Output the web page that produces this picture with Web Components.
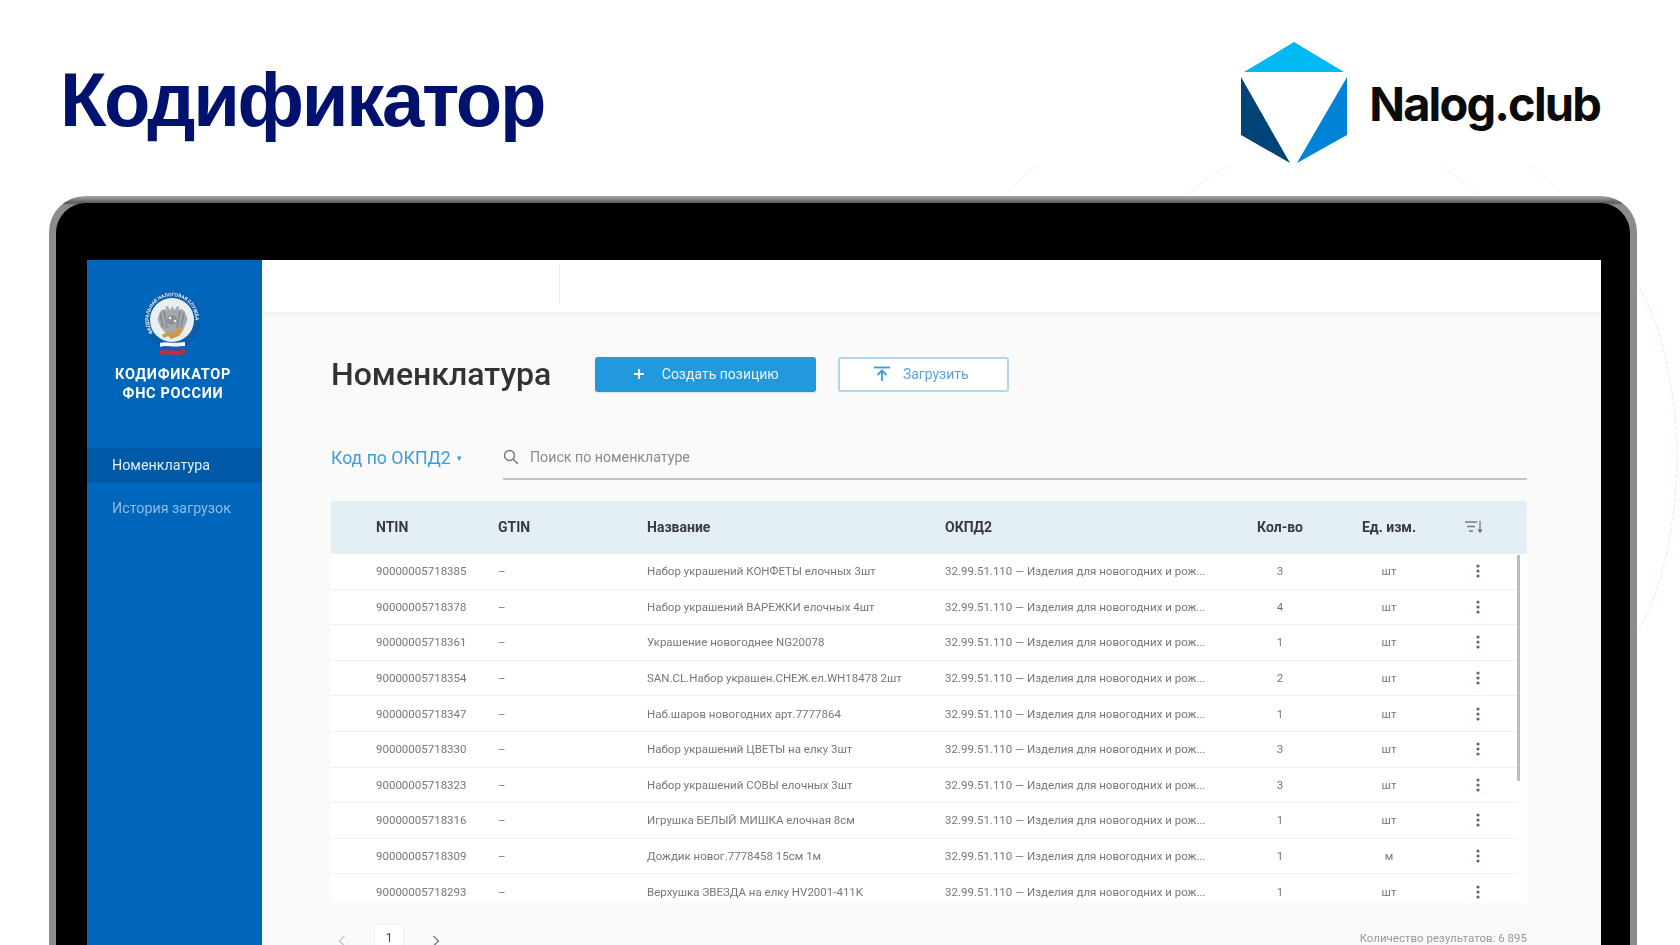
<!DOCTYPE html>
<html lang="ru">
<head>
<meta charset="utf-8">
<title>Кодификатор</title>
<style>
    html, body { margin: 0; height: 100%; background: #fff; overflow: hidden; }
    body { font-family: Roboto, "Liberation Sans", sans-serif; }
</style>
</head>
<body>
<slide-page>
    <slide-header></slide-header>
    <laptop-frame>
        <app-sidebar></app-sidebar>
        <nomenclature-view></nomenclature-view>
    </laptop-frame>
</slide-page>

<script>
// Outer slide: title row + laptop mockup
class SlidePage extends HTMLElement {
    constructor() {
        super();
        this.attachShadow({ mode: 'open' });
        this.shadowRoot.innerHTML = `
            <style>
                :host { display: block; position: relative; width: 1680px; height: 945px; overflow: hidden; background: #fff; }
                .arcs { position: absolute; left: 0; top: 0; }
                .content { position: relative; }
            </style>
            <svg class="arcs" width="1680" height="945" fill="none" stroke="#fdeef1" stroke-width="1">
                <path d="M1004 197 Q1020 178 1037 165"/>
                <path d="M1184 197 Q1205 178 1230 165"/>
                <path d="M1440 165 Q1462 180 1483 197"/>
                <path d="M1531 165 Q1548 180 1564 197"/>
                <path d="M1636 283 C1664 325 1677 400 1677 458 C1677 516 1664 590 1636 633" stroke="#fddfe5" stroke-dasharray="4 2"/>
            </svg>
            <div class="content"><slot></slot></div>
        `;
    }
}

class SlideHeader extends HTMLElement {
    constructor() {
        super();
        this.attachShadow({ mode: 'open' });
        this.shadowRoot.innerHTML = `
            <style>
                :host { display: flex; justify-content: space-between; height: 196px; padding: 0 80px 0 60px; }
                h1 {
                    margin: 54px 0 0;
                    font: 700 76px/1.2 "Liberation Sans", Arial, sans-serif;
                    letter-spacing: -2.3px;
                    color: #00126e;
                }
                .logo { display: flex; align-items: flex-start; padding-top: 42px; gap: 22px; }
                .brand {
                    font: 700 47px/1 Inter, "Liberation Sans", sans-serif;
                    color: #0b0b0b;
                    letter-spacing: -1.85px;
                    margin-top: 38px;
                }
                svg { display: block; }
            </style>
            <h1>Кодификатор</h1>
            <div class="logo">
                <svg width="106" height="122" viewBox="1242 42 106 122">
                    <polygon points="1295,42 1245,72 1345,72" fill="#00b9f2"/>
                    <polygon points="1242,77 1242,135 1291,163" fill="#004377"/>
                    <polygon points="1348,77 1348,135 1298,163" fill="#0082d6"/>
                </svg>
                <div class="brand">Nalog.club</div>
            </div>
        `;
    }
}

class LaptopFrame extends HTMLElement {
    constructor() {
        super();
        this.attachShadow({ mode: 'open' });
        this.shadowRoot.innerHTML = `
            <style>
                :host {
                    display: block;
                    box-sizing: border-box;
                    width: 1588px;
                    height: 760px;
                    margin-left: 49px;
                    padding: 7px 7px 0 7px;
                    background: linear-gradient(to bottom, #a8a8a8 0, #5a5a5a 7px, #8c8c8c 9px, #8c8c8c 100%);
                    border-radius: 36px 36px 0 0;
                }
                .bezel {
                    height: 100%;
                    box-sizing: border-box;
                    padding: 57px 29px 0 31px;
                    background: #000;
                    border-radius: 30px 30px 0 0;
                }
                .screen { display: flex; height: 100%; background: #fafafa; overflow: hidden; filter: blur(.35px); }
            </style>
            <div class="bezel"><div class="screen"><slot></slot></div></div>
        `;
    }
}

class AppSidebar extends HTMLElement {
    constructor() {
        super();
        this.attachShadow({ mode: 'open' });
        this.shadowRoot.innerHTML = `
            <style>
                :host {
                    display: block;
                    flex: 0 0 175px;
                    background: #0066bb;
                    color: #fff;
                    font-family: Roboto, sans-serif;
                }
                .emblem { display: block; margin: 29px 0 0 53px; }
                .name {
                    margin-top: 6px;
                    padding-right: 3px;
                    text-align: center;
                    font: 700 14.5px/19px Roboto, sans-serif;
                    letter-spacing: .7px;
                }
                nav { margin-top: 45px; }
                .item { height: 35px; line-height: 35px; padding-left: 25px; font-size: 14.3px; margin-bottom: 8px; }
                .item.active { background: #0059a6; color: #e4eef7; }
                .item.muted { color: #8fbce3; }
            </style>
            <svg class="emblem" width="64" height="70" viewBox="-2 -4 64 70">
                <defs><path id="ring" d="M11 40a23.300 23.300 0 1 1 38 0"/></defs>
                <circle cx="30" cy="27" r="28.500" fill="#0c5ca6"/>
                <circle cx="30" cy="27" r="22" fill="#e9eef3"/>
                <text font-family="Roboto, sans-serif" font-size="5" font-weight="700" fill="#dfe9f3"><textPath href="#ring" textLength="88" lengthAdjust="spacing">ФЕДЕРАЛЬНАЯ НАЛОГОВАЯ СЛУЖБА</textPath></text>
                <!-- eagle -->
                <path d="M30 13l2.500 4 3-4 2 1-1 3 3-1 3 2 3 8-3 8-4 5-5 1-3 3-3-3-5-1-4-5-3-8 3-8 3-2 3 1-1-3 2-1 3 4z" fill="#a4a9ae"/>
                <path d="M18 20l3 14M22 18l3 17M42 20l-3 14M38 18l-3 17" stroke="#858a90" stroke-width="1.500" fill="none"/>
                <circle cx="30" cy="27" r="5" fill="#8b9096"/>
                <circle cx="28" cy="25" r="1.200" fill="#f4f4f4"/><circle cx="33" cy="28" r="1.200" fill="#f4f4f4"/>
                <!-- gold sprigs -->
                <path d="M20 42l6-4 3 3 9-7 4 2-5 7-8 3-3-3-4 2z" fill="#c79c4c"/>
                <!-- flag -->
                <path d="M18 50c5-2 11 1 25-1v4c-13 2-19-1-25 1z" fill="#f4f6f8"/>
                <path d="M18 54c6-2 11 1 25-1v4c-13 2-19-1-25 1z" fill="#2c54ad"/>
                <path d="M18 58c6-2 11 1 25-1v4c-13 2-19-1-25 1z" fill="#cf2a30"/>
            </svg>
            <div class="name">КОДИФИКАТОР<br>ФНС РОССИИ</div>
            <nav>
                <div class="item active">Номенклатура</div>
                <div class="item muted">История загрузок</div>
            </nav>
        `;
    }
}

// Main content: top band, title row, search, table, pager
class NomenclatureView extends HTMLElement {
    constructor() {
        super();
        this.attachShadow({ mode: 'open' });
        this.shadowRoot.innerHTML = `
            <style>
                :host { display: block; flex: 1; min-width: 0; font-family: Roboto, sans-serif; color: #333; }
                .topbar {
                    height: 52px;
                    background: #fff;
                    box-shadow: 0 2px 6px rgba(0,0,0,.06);
                    display: flex;
                    padding: 5px 0 8px 297px;
                    box-sizing: border-box;
                }
                .topbar i { width: 1px; background: #ececec; }
                .body { padding: 45px 74px 0 69px; }
                .title-row { display: flex; align-items: center; height: 35px; }
                h2 { margin: 0 44px 0 0; font: 500 32px/35px Roboto, sans-serif; color: #333; white-space: nowrap; }
                .btn {
                    box-sizing: border-box;
                    height: 35px;
                    padding-bottom: 1px;
                    border-radius: 3px;
                    display: flex;
                    align-items: center;
                    justify-content: center;
                    font-size: 14px;
                    gap: 17px;
                }
                .primary { width: 221px; background: #2299dd; color: #e9f5fc; margin-right: 22px; box-shadow: 0 1px 2px rgba(0,0,0,.12); }
                .secondary { width: 171px; background: #fff; color: #5aa5d8; border: 2px solid #b2d6eb; gap: 12px; padding-right: 6px; }
                .filter-row { display: flex; margin-top: 48px; height: 40px; }
                .okpd { width: 172px; color: #3d9bd9; font-size: 17.7px; line-height: 36px; white-space: nowrap; }
                .okpd span { font-size: 8px; vertical-align: 3px; }
                .search {
                    flex: 1;
                    display: flex;
                    align-items: center;
                    gap: 11px;
                    border-bottom: 2px solid #c4c4c4;
                    color: #8a8a8a;
                    font-size: 14.2px;
                    padding-bottom: 4px;
                }
                nom-table { margin-top: 21px; }
                .pager { display: flex; align-items: flex-start; padding: 21px 0 0 7px; color: #555; }
                .pager svg { margin-top: 11px; }
                .page {
                    box-sizing: border-box;
                    width: 30px;
                    height: 40px;
                    margin: 0 28px;
                    padding-top: 8px;
                    background: #fff;
                    border: 1px solid #eee;
                    border-radius: 3px;
                    text-align: center;
                    font-size: 12px;
                    line-height: 11px;
                    color: #444;
                }
                .count { margin-left: auto; padding-top: 9px; font-size: 11.5px; color: #999; line-height: 11px; white-space: nowrap; }
            </style>
            <div class="topbar"><i></i></div>
            <div class="body">
                <div class="title-row">
                    <h2>Номенклатура</h2>
                    <div class="btn primary">
                        <svg width="12" height="12" viewBox="0 0 12 12"><path d="M6 1v10M1 6h10" stroke="#fff" stroke-width="1.800"/></svg>
                        <span>Создать позицию</span>
                    </div>
                    <div class="btn secondary">
                        <svg width="18" height="16" viewBox="0 0 18 16" fill="none" stroke="#3d9bd9" stroke-width="1.800"><path d="M1 1.500h16"/><path d="M9 15V5M4.500 9L9 4.500 13.500 9"/></svg>
                        <span>Загрузить</span>
                    </div>
                </div>
                <div class="filter-row">
                    <div class="okpd">Код по ОКПД2 <span>▼</span></div>
                    <div class="search">
                        <svg width="16" height="16" viewBox="0 0 16 16" fill="none" stroke="#777" stroke-width="1.400"><circle cx="6.500" cy="6.500" r="5"/><path d="M10.200 10.200L15 15"/></svg>
                        <span>Поиск по номенклатуре</span>
                    </div>
                </div>
                <nom-table></nom-table>
                <div class="pager">
                    <svg width="8" height="12" viewBox="0 0 8 12" fill="none" stroke="#c4c4c4" stroke-width="1.300"><path d="M6.500 1L1.500 6l5 5"/></svg>
                    <div class="page">1</div>
                    <svg width="8" height="12" viewBox="0 0 8 12" fill="none" stroke="#777" stroke-width="1.300"><path d="M1.500 1l5 5-5 5"/></svg>
                    <div class="count">Количество результатов: 6 895</div>
                </div>
            </div>
        `;
    }
}

const ROWS = [
    ['90000005718385', 'Набор украшений КОНФЕТЫ елочных 3шт', '3', 'шт'],
    ['90000005718378', 'Набор украшений ВАРЕЖКИ елочных 4шт', '4', 'шт'],
    ['90000005718361', 'Украшение новогоднее NG20078', '1', 'шт'],
    ['90000005718354', 'SAN.CL.Набор украшен.СНЕЖ.ел.WH18478 2шт', '2', 'шт'],
    ['90000005718347', 'Наб.шаров новогодних арт.7777864', '1', 'шт'],
    ['90000005718330', 'Набор украшений ЦВЕТЫ на елку 3шт', '3', 'шт'],
    ['90000005718323', 'Набор украшений СОВЫ елочных 3шт', '3', 'шт'],
    ['90000005718316', 'Игрушка БЕЛЫЙ МИШКА елочная 8см', '1', 'шт'],
    ['90000005718309', 'Дождик новог.7778458 15см 1м', '1', 'м'],
    ['90000005718293', 'Верхушка ЗВЕЗДА на елку HV2001-411K', '1', 'шт']
];
const OKPD = '32.99.51.110 — Изделия для новогодних и рож...';

class NomTable extends HTMLElement {
    constructor() {
        super();
        this.attachShadow({ mode: 'open' });
        const COLS = 'grid-template-columns: 45px 122px 149px 298px 280px 110px 108px 70px;';
        this.shadowRoot.innerHTML = `
            <style>
                :host { display: block; position: relative; height: 402px; overflow: hidden; background: #fff; border-radius: 2px; }
                .row { display: grid; ${COLS} align-items: center; }
                .head {
                    height: 53px;
                    box-sizing: border-box;
                    padding-bottom: 2px;
                    background: #e4eef5;
                    font: 700 14px/1 Roboto, sans-serif;
                    color: #3a3a3a;
                }
                .line {
                    height: 35.6px;
                    box-sizing: border-box;
                    margin-right: 9px;
                    border-bottom: 1.5px solid #f2f2f2;
                    font-size: 11.5px;
                    color: #777;
                    white-space: nowrap;
                }
                .line:last-of-type { border-bottom: 0; }
                .c { text-align: center; }
                .dots { display: flex; justify-content: center; }
                .dots.sort { margin-right: 8px; }
                .dots b { display: flex; align-items: center; justify-content: center; width: 20px; height: 20px; border-radius: 50%; box-shadow: 0 1px 2px rgba(0,0,0,.03); }
                .thumb { position: absolute; right: 7px; top: 54px; width: 3.5px; height: 226px; background: #bcbcbc; }
            </style>
            <div class="row head">
                <span></span><span>NTIN</span><span>GTIN</span><span>Название</span><span>ОКПД2</span>
                <span class="c">Кол-во</span><span class="c">Ед. изм.</span>
                <span class="dots sort">
                    <svg width="20" height="14" viewBox="0 0 20 14" fill="none" stroke="#777" stroke-width="1.300"><path d="M1 2h12M3 6.500h8M5 11h4"/><path d="M16 1v11M14 9.500l2 2.500 2-2.500"/></svg>
                </span>
            </div>
            ${ROWS.map(r => `
                <div class="row line">
                    <span></span><span>${r[0]}</span><span>–</span><span>${r[1]}</span><span>${OKPD}</span>
                    <span class="c">${r[2]}</span><span class="c">${r[3]}</span>
                    <span class="dots"><b>
                        <svg width="4" height="14" viewBox="0 0 4 14" fill="#666"><circle cx="2" cy="2" r="1.600"/><circle cx="2" cy="7" r="1.600"/><circle cx="2" cy="12" r="1.600"/></svg>
                    </b></span>
                </div>
            `).join('')}
            <div class="thumb"></div>
        `;
    }
}

customElements.define('slide-page', SlidePage);
customElements.define('slide-header', SlideHeader);
customElements.define('laptop-frame', LaptopFrame);
customElements.define('app-sidebar', AppSidebar);
customElements.define('nomenclature-view', NomenclatureView);
customElements.define('nom-table', NomTable);
</script>
</body>
</html>
